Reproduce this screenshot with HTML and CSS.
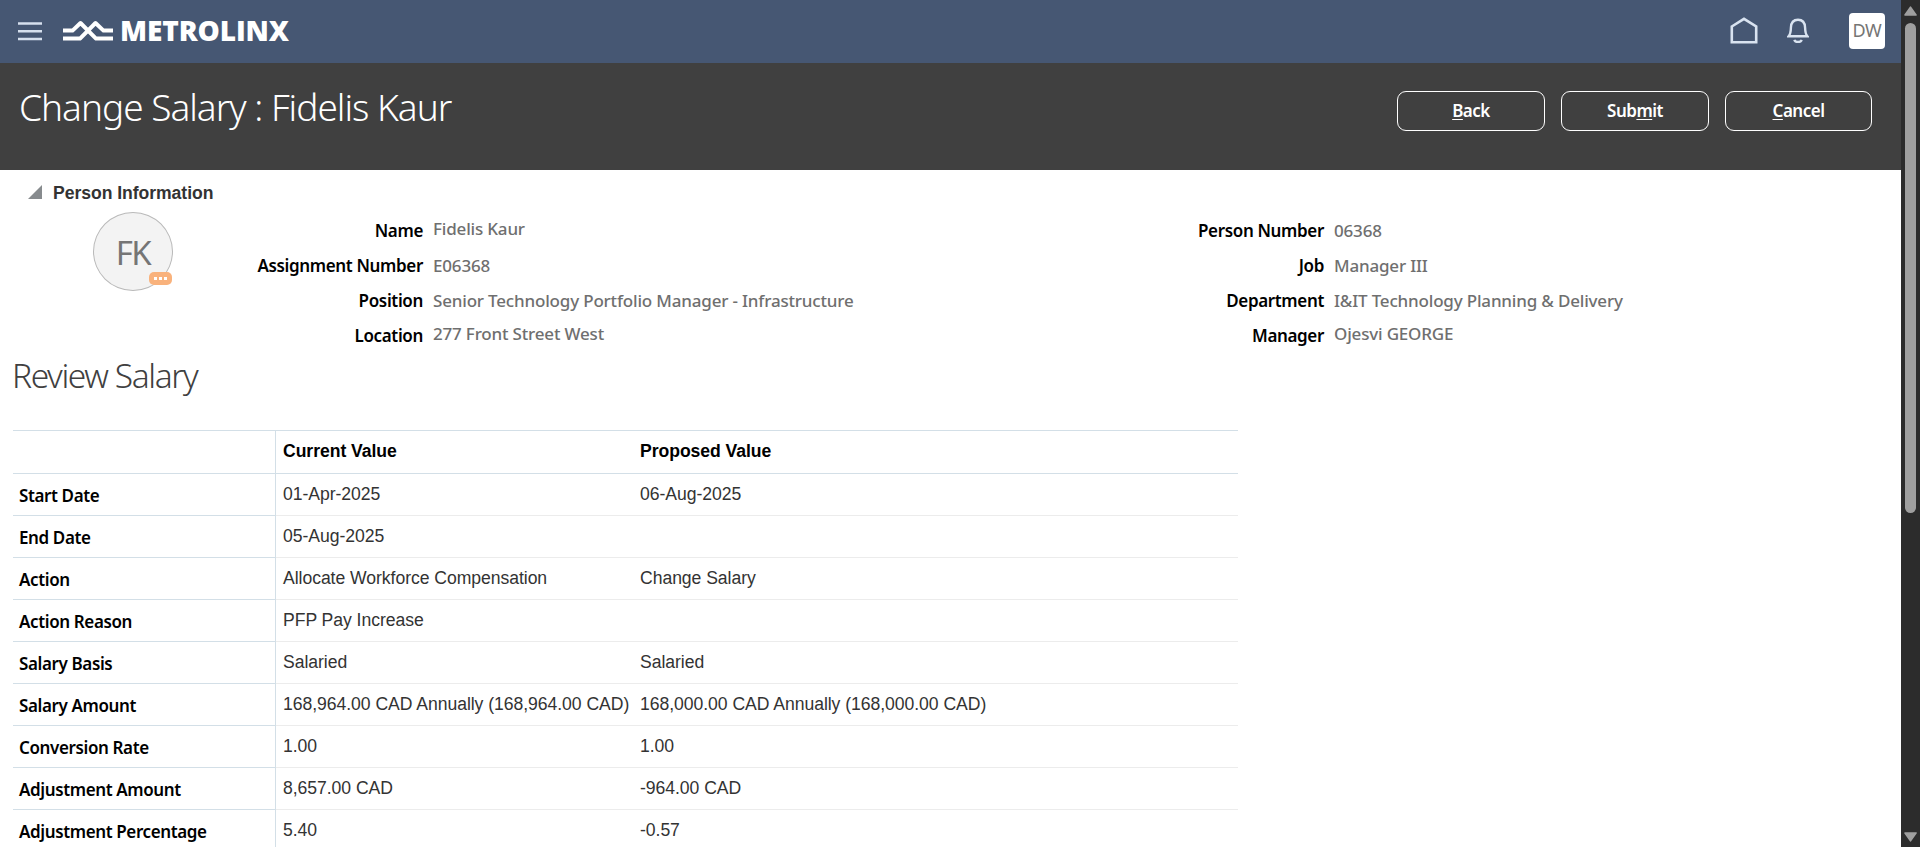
FILE: index.html
```
<!DOCTYPE html>
<html lang="en">
<head>
<meta charset="utf-8">
<title>Change Salary</title>
<link rel="stylesheet" href="styles.css">
</head>
<body>
<div class="page">
  <header class="topbar">
    <svg class="menu" width="24" height="19" viewBox="0 0 24 19"><path d="M0 1.5h24M0 9.3h24M0 17h24" stroke="#d6e0ee" stroke-width="2.4"/></svg>
    <svg class="mark" width="50" height="21" viewBox="0 0 50 21" fill="none" stroke="#fff" stroke-width="4" stroke-linejoin="round">
      <path d="M0 10.600h9.500L17.500 3 33 18.600h17"/>
      <path d="M50 10.600h-9.500L32.500 3 17 18.600H0"/>
    </svg>
    <span class="brand">METROLINX</span>
    <div class="tools">
      <svg width="28" height="28" viewBox="0 0 28 28" fill="none" stroke="#d9e3f0" stroke-width="2.600"><path d="M1.800 9.500L14 1.800l12.200 7.700v15.800H1.800z"/></svg>
      <svg class="bell" width="22" height="26" viewBox="0 0 22 26" fill="none" stroke="#d9e3f0" stroke-width="2.400"><path d="M1.600 18.200c1.800-2 2.200-4.500 2.300-8.500C4.100 4.500 6.500 1.800 11 1.800s6.900 2.700 7.100 7.900c.1 4 .5 6.500 2.300 8.500z"/><path d="M7.300 21.800c1 2.800 6.400 2.800 7.400 0"/></svg>
      <div class="user">DW</div>
    </div>
  </header>
  <div class="titlebar">
    <h1>Change Salary : Fidelis Kaur</h1>
    <div class="actions">
      <button><u>B</u>ack</button>
      <button>Sub<u>m</u>it</button>
      <button><u>C</u>ancel</button>
    </div>
  </div>
  <main>
    <div class="section"><svg width="14" height="14" viewBox="0 0 14 14"><path d="M14 0v14H0z" fill="#878b8e"/></svg><h2>Person Information</h2></div>
    <div class="person">
      <div class="avatar">FK<span class="badge"><i></i><i></i><i></i></span></div>
      <dl class="left">
        <dt>Name</dt><dd class="up">Fidelis Kaur</dd>
        <dt>Assignment Number</dt><dd>E06368</dd>
        <dt>Position</dt><dd>Senior Technology Portfolio Manager - Infrastructure</dd>
        <dt>Location</dt><dd class="up">277 Front Street West</dd>
      </dl>
      <dl class="right">
        <dt>Person Number</dt><dd>06368</dd>
        <dt>Job</dt><dd>Manager III</dd>
        <dt>Department</dt><dd>I&amp;IT Technology Planning &amp; Delivery</dd>
        <dt>Manager</dt><dd class="up">Ojesvi GEORGE</dd>
      </dl>
    </div>
    <h3>Review Salary</h3>
    <div class="grid">
      <div class="row head"><div class="label"></div><div class="cur">Current Value</div><div class="new">Proposed Value</div></div>
      <div class="row"><div class="label">Start Date</div><div class="cur">01-Apr-2025</div><div class="new">06-Aug-2025</div></div>
      <div class="row"><div class="label">End Date</div><div class="cur">05-Aug-2025</div><div class="new"></div></div>
      <div class="row"><div class="label">Action</div><div class="cur">Allocate Workforce Compensation</div><div class="new">Change Salary</div></div>
      <div class="row"><div class="label">Action Reason</div><div class="cur">PFP Pay Increase</div><div class="new"></div></div>
      <div class="row"><div class="label">Salary Basis</div><div class="cur">Salaried</div><div class="new">Salaried</div></div>
      <div class="row"><div class="label">Salary Amount</div><div class="cur">168,964.00 CAD Annually (168,964.00 CAD)</div><div class="new">168,000.00 CAD Annually (168,000.00 CAD)</div></div>
      <div class="row"><div class="label">Conversion Rate</div><div class="cur">1.00</div><div class="new">1.00</div></div>
      <div class="row"><div class="label">Adjustment Amount</div><div class="cur">8,657.00 CAD</div><div class="new">-964.00 CAD</div></div>
      <div class="row"><div class="label">Adjustment Percentage</div><div class="cur">5.40</div><div class="new">-0.57</div></div>
    </div>
  </main>
</div>
<div class="scroll">
  <svg width="13" height="10" viewBox="0 0 13 10"><path d="M6.500 1.200L12 9H1z" fill="#9f9f9f" stroke="#9f9f9f" stroke-width="1.600" stroke-linejoin="round"/></svg>
  <div class="thumb"></div>
  <svg class="down" width="13" height="10" viewBox="0 0 13 10"><path d="M6.500 8.800L12 1H1z" fill="#9f9f9f" stroke="#9f9f9f" stroke-width="1.600" stroke-linejoin="round"/></svg>
</div>
</body>
</html>
```
FILE: styles.css
```
* { box-sizing: border-box; }
body {
  margin: 0;
  display: flex;
  width: 1920px;
  height: 847px;
  overflow: hidden;
  background: #fff;
  font-family: "Noto Sans", "Open Sans", sans-serif;
}
h1, h2, h3, dl, dd { margin: 0; }
.page { width: 1901px; height: 847px; overflow: hidden; }
.topbar {
  display: flex;
  align-items: center;
  height: 63px;
  padding: 0 16px 1px 18px;
  background: #465773;
}
.mark { margin-left: 21px; margin-right: 7px; margin-top: -1px; }
.brand {
  color: #fff;
  font-family: "Open Sans", sans-serif;
  font-size: 28px;
  font-weight: 800;
  letter-spacing: -0.1px;
  margin-top: -2px;
}
.tools { display: flex; align-items: center; margin-left: auto; }
.bell { margin-left: 29px; }
.user {
  width: 36px;
  height: 36px;
  margin-left: 40px;
  border-radius: 4px;
  background: #fff;
  color: #757575;
  font-size: 18px;
  line-height: 35px;
  text-align: center;
  letter-spacing: -0.3px;
}
.titlebar {
  display: flex;
  justify-content: space-between;
  height: 107px;
  padding: 0 29px 0 19px;
  background: #404040;
}
h1 {
  color: #fff;
  font-size: 37px;
  font-weight: 300;
  line-height: 88px;
  letter-spacing: -1px;
}
.actions { display: flex; gap: 16px; padding-top: 28px; }
button {
  width: 148px;
  height: 40px;
  padding: 0 0 2px;
  border: 1px solid #fff;
  border-radius: 9px;
  background: transparent;
  color: #fff;
  font: 600 17px "Noto Sans", sans-serif;
  letter-spacing: -0.5px;
}
button:last-child { width: 147px; }
u { text-underline-offset: 2px; }
.section { display: flex; align-items: center; height: 43px; padding-left: 28px; }
.section h2 {
  margin-left: 11px;
  padding-top: 3px;
  color: #333;
  font: bold 17.6px "Liberation Sans", sans-serif;
  letter-spacing: -0.05px;
}
.section svg { margin-top: 1px; }
.person { display: flex; height: 140px; padding-left: 93px; }
.avatar {
  position: relative;
  width: 80px;
  height: 79px;
  margin-top: -1px;
  border: 1px solid #b9b9b9;
  border-radius: 50%;
  background: #f3f3f3;
  color: #757575;
  font-size: 33px;
  line-height: 80px;
  text-align: center;
  letter-spacing: -1.5px;
}
.badge {
  position: absolute;
  right: 0;
  bottom: 5px;
  display: flex;
  align-items: center;
  justify-content: center;
  gap: 2px;
  width: 23px;
  height: 13px;
  border-radius: 5px;
  background: #f9b27c;
}
.badge i { width: 3px; height: 3px; background: #fff; }
dl {
  display: grid;
  grid-auto-rows: 35px;
  column-gap: 10px;
  font-size: 17px;
  line-height: 35px;
  white-space: nowrap;
}
.left { grid-template-columns: 250px 641px; }
.right { grid-template-columns: 250px 500px; }
dt { color: #000; font-weight: 560; text-align: right; letter-spacing: -0.35px; }
dd { color: #6f6f6f; font-weight: 500; letter-spacing: -0.18px; }
.up { line-height: 31px; }
h3 {
  height: 77px;
  padding-left: 12px;
  color: #404040;
  font-size: 33.5px;
  font-weight: 300;
  line-height: 44px;
  letter-spacing: -1.4px;
}
.grid { width: 1225px; margin-left: 13px; border-top: 1px solid #d3dfe7; }
.row { display: grid; grid-template-columns: 263px 357px 1fr; grid-template-rows: 42px; white-space: nowrap; }
.row > div { border-bottom: 1px solid #ececec; line-height: 41px; }
.row .cur, .row .new {
  padding-left: 7px;
  color: #333;
  font-family: "Liberation Sans", sans-serif;
  font-size: 17.6px;
  letter-spacing: -0.05px;
}
.row .label {
  padding-left: 6px;
  border-right: 1px solid #d3dfe7;
  border-bottom-color: #d3dfe7;
  color: #000;
  font-size: 17px;
  font-weight: 560;
  letter-spacing: -0.38px;
  line-height: 43px;
}
.row.head { grid-template-rows: 43px; }
.row.head > div { border-bottom-color: #d3dfe7; color: #000; font-weight: bold; }
.scroll {
  display: flex;
  flex-direction: column;
  align-items: center;
  width: 19px;
  padding: 6px 0 5px;
  background: #2c2c2c;
}
.thumb { width: 11px; height: 490px; margin-top: 7px; border-radius: 6px; background: #9f9f9f; }
.down { margin-top: auto; }
```
